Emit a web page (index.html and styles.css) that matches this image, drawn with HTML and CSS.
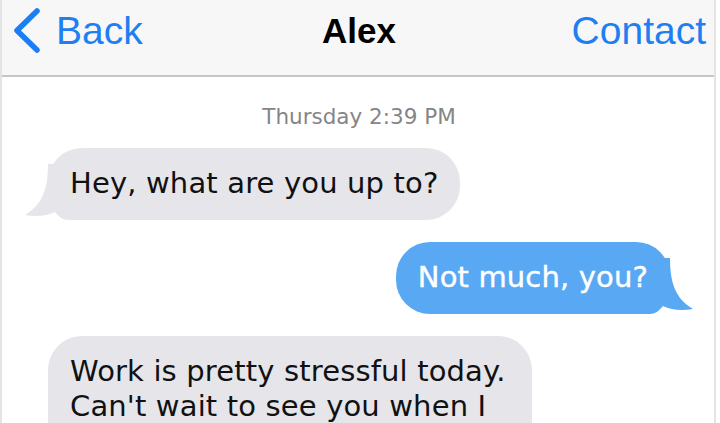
FILE: index.html
```html
<!DOCTYPE html>
<html lang="en">
<head>
    <meta charset="UTF-8">
    <meta name="viewport" content="width=device-width, initial-scale=1.0">
    <title>Alex - Messages</title>
    <link rel="stylesheet" href="styles.css">
</head>
<body>

<div class="phone">
    <header class="topbar">
        <a class="nav-back" href="#">
            <svg class="chevron" width="30" height="46" viewBox="0 0 30 46">
                <path d="M25 3 L5 22.5 L25 42" fill="none" stroke="#1c7ef4" stroke-width="5.5" stroke-linecap="round" stroke-linejoin="round"/>
            </svg>
            <span>Back</span>
        </a>
        <h1 class="title">Alex</h1>
        <a class="nav-contact" href="#">Contact</a>
    </header>

    <main class="thread">
        <p class="stamp">Thursday 2:39 PM</p>

        <div class="msg msg-in">
            Hey, what are you up to?
            <svg class="tail" width="60" height="56" viewBox="0 0 60 56">
                <path d="M26 0 C26 22 22 40 3 51 C14 53 25 52 33 48 C37 53 41 56 46 56 H60 V0 Z"/>
            </svg>
        </div>

        <div class="msg msg-out">
            Not much, you?
            <svg class="tail" width="60" height="56" viewBox="0 0 60 56">
                <path d="M26 0 C26 22 22 40 3 51 C14 53 25 52 33 48 C37 53 41 56 46 56 H60 V0 Z"/>
            </svg>
        </div>

        <div class="msg msg-in msg-long">
            Work is pretty stressful today.<br>
            Can't wait to see you when I<br>
            get home.
        </div>
    </main>
</div>

</body>
</html>
```

FILE: styles.css
```css
body {
    margin: 0;
    padding: 0;
    background: #fff;
    font-family: "DejaVu Sans", Verdana, sans-serif;
    overflow: hidden;
}
.phone {
    width: 716px;
    height: 423px;
    box-sizing: border-box;
    border-left: 2px solid #e4e4e4;
    border-right: 2px solid #e4e4e4;
    overflow: hidden;
}
.topbar {
    height: 77px;
    box-sizing: border-box;
    background: #f7f7f7;
    border-bottom: 2px solid #c6c6c6;
    display: flex;
    align-items: center;
    justify-content: space-between;
    padding: 0 8px 13px 10px;
    font-family: "Liberation Sans", Arial, sans-serif;
}
.topbar a {
    color: #1f7ff2;
    text-decoration: none;
    font-size: 39px;
}
.nav-back {
    display: flex;
    align-items: center;
    gap: 14px;
    width: 200px;
}
.chevron {
    display: block;
}
.title {
    margin: 0;
    font-size: 35px;
    font-weight: bold;
    color: #000;
}
.nav-contact {
    width: 200px;
    text-align: right;
}
.thread {
    display: flex;
    flex-direction: column;
    padding: 0 44px 0 46px;
}
.stamp {
    margin: 27px 0 18px;
    text-align: center;
    font-size: 21.5px;
    line-height: 26px;
    color: #858585;
}
.msg {
    position: relative;
    z-index: 0;
    font-size: 29px;
    line-height: 35px;
    letter-spacing: 0.15px;
    padding: 18px 22px 19px 22px;
    border-radius: 34px;
    margin-bottom: 22px;
}
.msg-in {
    align-self: flex-start;
    background: #e5e5ea;
    color: #111;
}
.msg-out {
    align-self: flex-end;
    background: #58a8f3;
    color: #fff;
    -webkit-text-stroke: 0.4px #fff;
}
.msg-long {
    width: 440px;
}
.tail {
    position: absolute;
    z-index: -1;
    bottom: 0;
    left: -26px;
}
.msg-in .tail path {
    fill: #e5e5ea;
}
.msg-out .tail {
    left: auto;
    right: -26px;
    transform: scaleX(-1);
}
.msg-out .tail path {
    fill: #58a8f3;
}
```
